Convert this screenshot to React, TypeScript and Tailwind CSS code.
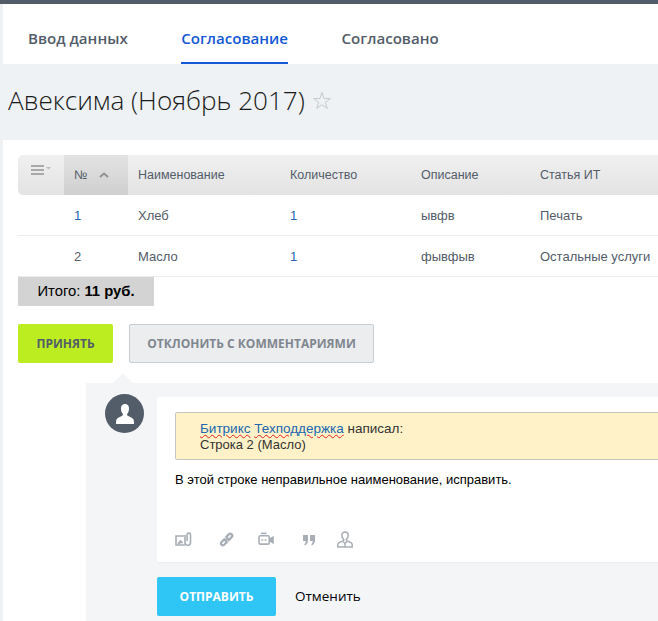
const rows = [
  { n: "1", name: "Хлеб", qty: "1", desc: "ывфв", item: "Печать" },
  { n: "2", name: "Масло", qty: "1", desc: "фывфыв", item: "Остальные услуги" },
];

function TabItem({ label, active }: { label: string; active?: boolean }) {
  return (
    <div
      className={`flex h-[52px] items-center border-b-[2px] pt-[2px] text-[15.1px] font-semibold ${
        active ? "border-[#1558d6] text-[#1558d6]" : "border-transparent text-[#535c69]"
      }`}
    >
      {label}
    </div>
  );
}

function Avatar() {
  return (
    <div className="flex h-[39px] w-[39px] shrink-0 items-center justify-center rounded-full bg-[#535c69]">
      <svg width="18" height="20" viewBox="0 0 18 20" fill="#fff">
        <path d="M9 0c3 0 4.200 2.400 4 5.200-.1 1.800-.8 3.400-1.600 4.400-.4.6-.4 1.700.3 2.200 1.600 1 4.800 1.800 5.800 3.600.4.8.5 3 .5 4.600H0c0-1.600.1-3.800.5-4.600 1-1.800 4.200-2.600 5.800-3.600.7-.5.7-1.600.3-2.200C5.800 8.600 5.100 7 5 5.200 4.800 2.400 6 0 9 0z" />
      </svg>
    </div>
  );
}

function ToolIcons() {
  return (
    <div className="flex h-[22px] items-center pl-[18px] text-[#a8aeb5]">
      <svg className="mr-[27px]" width="17" height="15" viewBox="0 0 17 15" fill="none" stroke="currentColor" strokeWidth="1.6">
        <path d="M10 13H1V4h8" />
        <path d="M3 12l2.500-3 2 2" fill="currentColor" />
        <path d="M10 3v7.500a2.500 2.500 0 0 0 5.500 0V2.800a1.700 1.700 0 0 0-3.400 0V9" />
      </svg>
      <svg className="mr-[24px]" width="15" height="15" viewBox="0 0 16 16" fill="none" stroke="currentColor" strokeWidth="2.400">
        <path d="M6.500 7L2.500 11a2 2 0 0 0 2.800 2.800L9 10" />
        <path d="M7 6l3.500-3.500a2 2 0 0 1 3 3L9.500 9.500" />
        <path d="M6 10l4-4" />
      </svg>
      <svg className="mr-[29px]" width="16" height="14" viewBox="0 0 17 15" fill="none" stroke="currentColor" strokeWidth="1.700">
        <rect x="1" y="4" width="11" height="9" rx="1.500" />
        <path d="M3 1.500h6" />
        <path d="M12 8l4-2.500v6L12 9" fill="currentColor" />
        <path d="M3.500 8.500h2M7 8.500h2" />
      </svg>
      <svg className="mr-[22px]" width="12" height="13" viewBox="0 0 12 13" fill="currentColor">
        <path d="M0 2h5v5c0 2.500-1 4.500-3 5.500l-.8-1.200C2.200 10.500 2.700 9.500 2.700 8H0z" />
        <path d="M7 2h5v5c0 2.500-1 4.500-3 5.500l-.8-1.200c1-.8 1.500-1.800 1.500-3.300H7z" />
      </svg>
      <svg width="16" height="17" viewBox="0 0 16 17" fill="none" stroke="currentColor" strokeWidth="1.500">
        <path d="M8 1c2 0 3.200 1.400 3.200 3.400 0 1.600-.8 3-1.800 3.800v1.400l4.800 2.200c.8.400 1 1 1 1.700V16H.8v-2.500c0-.7.200-1.300 1-1.700l4.800-2.200V8.200C5.600 7.400 4.800 6 4.800 4.400 4.800 2.400 6 1 8 1z" />
        <path d="M6 10.500l2 2 2-2M8 12.500V16" />
      </svg>
    </div>
  );
}

export default function App() {
  return (
    <div className="h-[621px] w-[658px] overflow-hidden bg-white font-['Liberation_Sans',sans-serif]">
      <div className="h-[4px] bg-[#535c69]" />
      <div className="flex">
        <div className="w-[3px] shrink-0 self-stretch bg-[#eef2f4]" />
        <div className="min-w-0 flex-1">
          <div className="flex h-[60px] gap-[53.5px] bg-white pl-[25px] pt-[8px] font-['Open_Sans',sans-serif]">
            <TabItem label="Ввод данных" />
            <TabItem label="Согласование" active />
            <TabItem label="Согласовано" />
          </div>
          <div className="flex h-[76px] items-start bg-[#eef2f4] pl-[5px] pt-[18px] font-['Open_Sans',sans-serif]">
            <h1 className="text-[26.1px] leading-[36px] font-light text-[#1a1a1a]">Авексима (Ноябрь 2017)</h1>
            <svg className="ml-[7px] mt-[9px]" width="20" height="20" viewBox="0 0 20 20" fill="none" stroke="#c6c9cc" strokeWidth="1">
              <path d="M10 1.500l2.100 6.100h6.400l-5.200 3.800 2 6.100-5.300-3.800-5.300 3.800 2-6.100-5.200-3.800h6.400z" />
            </svg>
          </div>
          <div className="bg-white pl-[15px] pt-[15px]">
            <div className="w-[660px] text-[#535c69]">
              <div className="flex h-[40px] items-center rounded-l-[5px] bg-gradient-to-b from-[#f0f0f0] to-[#e3e3e3] text-[12.5px]">
                <div className="flex h-full w-[46px] justify-center pt-[10px]">
                  <svg width="20" height="10" viewBox="0 0 20 10">
                    <path d="M0 0h13v2H0zM0 4h13v2H0zM0 8h13v2H0z" fill="#a8a8a8" />
                    <path d="M15 2h5l-2.500 2.500z" fill="#bdbdbd" />
                  </svg>
                </div>
                <div className="flex h-full w-[64px] items-center bg-gradient-to-b from-[#e3e3e3] to-[#cfcfcf] pl-[10px]">
                  <span>№</span>
                  <svg className="ml-[12px]" width="10" height="6" viewBox="0 0 10 6" fill="none" stroke="#8c9196" strokeWidth="2">
                    <path d="M1 5l4-3.500L9 5" />
                  </svg>
                </div>
                <div className="w-[152px] pl-[10px]">Наименование</div>
                <div className="w-[131px] pl-[10px]">Количество</div>
                <div className="w-[119px] pl-[10px]">Описание</div>
                <div className="flex-1 pl-[10px]">Статья ИТ</div>
              </div>
              {rows.map((r) => (
                <div key={r.n} className="flex h-[41px] items-center border-b border-[#ececec] pt-[1px] text-[13px]">
                  <div className="w-[46px]" />
                  <div className={`w-[64px] pl-[10px] ${r.n === "1" ? "text-[#2067b0]" : ""}`}>{r.n}</div>
                  <div className="w-[152px] pl-[10px]">{r.name}</div>
                  <div className="w-[131px] pl-[10px] text-[#2067b0]">{r.qty}</div>
                  <div className="w-[119px] pl-[10px]">{r.desc}</div>
                  <div className="flex-1 pl-[10px]">{r.item}</div>
                </div>
              ))}
              <div className="flex h-[29px] w-[136px] items-center justify-center bg-[#d3d3d3] text-[14.8px] text-black">
                <span>
                  Итого: <b>11 руб.</b>
                </span>
              </div>
            </div>
            <div className="mt-[18px] flex gap-[16px] font-['Open_Sans',sans-serif] text-[12px] font-bold">
              <div className="flex h-[39px] w-[95px] items-center justify-center rounded-[2px] bg-[#bbed21] text-[#535c69]">ПРИНЯТЬ</div>
              <div className="flex h-[39px] w-[245px] items-center justify-center rounded-[2px] border border-[#c6cdd3] bg-[#ebedef] text-[#80868e]">
                ОТКЛОНИТЬ С КОММЕНТАРИЯМИ
              </div>
            </div>
            <div className="relative ml-[68px] mt-[20px] flex h-[300px] w-[600px] bg-[#f4f5f7] pl-[19px] pt-[11px]">
              <div className="absolute -top-[10px] left-[27px] h-0 w-0 border-x-[10px] border-b-[10px] border-x-transparent border-b-[#f4f5f7]" />
              <Avatar />
              <div className="ml-[13px] mt-[3px]">
                <div className="h-[166px] w-[520px] border-b border-[#ebedef] bg-white pl-[18px] pt-[15px]">
                  <div className="h-[48px] rounded-l-[2px] border border-[#c4c4c4] bg-[#fff2c8] pl-[24px] pt-[8px] text-[13px] leading-[16px] text-[#333]">
                    <div className="text-[13.5px]">
                      <span className="text-[#2067b0] underline decoration-wavy decoration-[#e02020] decoration-1">Битрикс</span>{" "}
                      <span className="text-[#2067b0] underline decoration-wavy decoration-[#e02020] decoration-1">Техподдержка</span> написал:
                    </div>
                    <div>Строка 2 (Масло)</div>
                  </div>
                  <p className="mt-[12px] text-[13px] leading-[16px] text-black">В этой строке неправильное наименование, исправить.</p>
                  <div className="mt-[40px] -ml-[18px]">
                    <ToolIcons />
                  </div>
                </div>
                <div className="mt-[14px] flex items-center">
                  <div className="flex h-[39px] w-[119px] items-center justify-center rounded-[2px] bg-[#2fc6f6] font-['Open_Sans',sans-serif] text-[12px] font-bold text-white">
                    ОТПРАВИТЬ
                  </div>
                  <span className="ml-[19px] font-['Open_Sans',sans-serif] text-[13.5px] text-black">Отменить</span>
                </div>
              </div>
            </div>
          </div>
        </div>
      </div>
    </div>
  );
}
